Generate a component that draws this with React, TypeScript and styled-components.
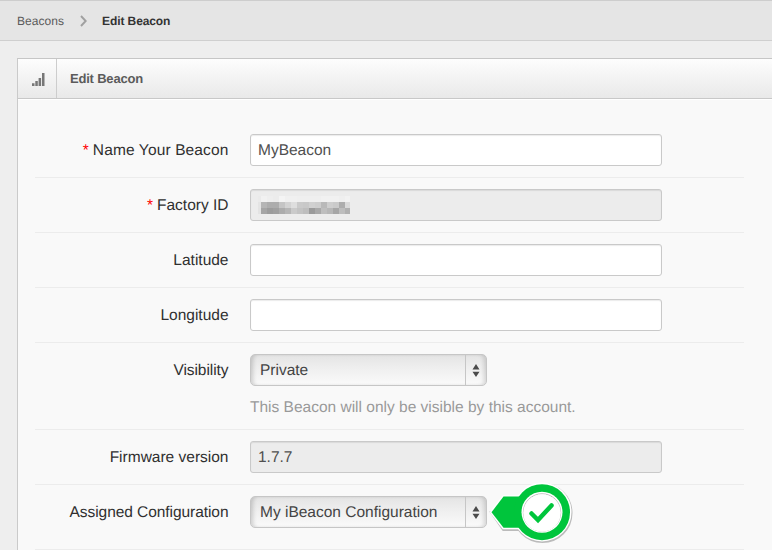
import React from "react";
import styled, { createGlobalStyle } from "styled-components";

const GlobalStyle = createGlobalStyle`
  * { box-sizing: border-box; }
  body {
    margin: 0;
    height: 550px;
    overflow: hidden;
    background: #eeeeee;
    font-family: "Liberation Sans", Arial, Helvetica, sans-serif;
    text-rendering: geometricPrecision;
    color: #333;
  }
`;

const Page = styled.div`
  width: 772px;
  height: 550px;
  overflow: hidden;
`;

const Breadcrumbs = styled.nav`
  height: 41px;
  display: flex;
  align-items: center;
  padding: 0 0 0 17px;
  background: #e5e5e5;
  border-top: 1px solid #cdcdcd;
  border-bottom: 1px solid #cfcfcf;
  font-size: 12px;
`;

const Crumb = styled.span<{ $current?: boolean }>`
  color: ${(p) => (p.$current ? "#333" : "#5c5c5c")};
  font-weight: ${(p) => (p.$current ? 700 : 400)};
  letter-spacing: ${(p) => (p.$current ? "-0.1px" : "0.05px")};
`;

const Chevron = styled.svg`
  width: 8px;
  height: 12px;
  margin: 0 14px 0 16px;
`;

const Panel = styled.section`
  margin: 17px 0 0 17px;
  height: 492px;
  border-left: 1px solid #cacaca;
  border-top: 1px solid #c6c6c6;
  background: #f9f9f9;
`;

const PanelHeader = styled.header`
  height: 40px;
  display: flex;
  border-bottom: 1px solid #c8c8c8;
  background: linear-gradient(#fdfdfd, #e9e9e9);
  box-shadow: 0 1px 0 #fff;
`;

const HeaderIcon = styled.div`
  width: 39px;
  padding: 14px 0 0 14px;
  border-right: 1px solid #cdcdcd;
`;

const PanelTitle = styled.h1`
  margin: 0;
  padding-left: 13px;
  font-size: 13px;
  line-height: 39px;
  letter-spacing: -0.2px;
  color: #5b5b5b;
`;

const Form = styled.form`
  padding: 24px 28px 0 17px;
`;

const Row = styled.div<{ $height?: number }>`
  height: ${(p) => p.$height ?? 55}px;
  display: flex;
  align-items: flex-start;
  padding-top: 11px;
  border-bottom: 1px solid #ececec;
  font-size: 15.5px;
`;

const Label = styled.label<{ $tracking?: number }>`
  width: 193.5px;
  margin-right: 21.5px;
  text-align: right;
  line-height: 34px;
  letter-spacing: ${(p) => p.$tracking ?? 0}px;
  color: #303030;
  white-space: nowrap;
`;

const Required = styled.span`
  color: #f00;
  margin-right: 4px;
`;

const Field = styled.div<{ $readOnly?: boolean }>`
  width: 412px;
  height: 32px;
  padding: 0 7px;
  border: 1px solid #c9c9c9;
  border-radius: 3px;
  background: ${(p) => (p.$readOnly ? "#ececec" : "#fff")};
  box-shadow: inset 0 1px 1px rgba(0, 0, 0, 0.08);
  line-height: 32px;
  color: #505050;
`;

const Select = styled.div`
  width: 237px;
  height: 32px;
  display: flex;
  border: 1px solid #c6c6c6;
  border-radius: 5px;
  background: linear-gradient(#e4e4e4, #f0f0f0 50%, #fafafa);
  box-shadow: inset 4px 0 4px -2px rgba(0, 0, 0, 0.17),
    inset -4px 0 4px -2px rgba(0, 0, 0, 0.14);
  line-height: 32px;
  color: #444;
`;

const SelectValue = styled.span`
  flex: 1;
  padding-left: 9px;
`;

const Stepper = styled.span`
  width: 21px;
  display: flex;
  justify-content: center;
  align-items: center;
  border-left: 1px solid #c6c6c6;
`;

const Stack = styled.div`
  display: flex;
  flex-direction: column;
`;

const Hint = styled.span`
  margin-top: 13px;
  line-height: 18px;
  color: #999;
`;

const Mosaic = styled.div`
  display: grid;
  grid-template-columns: 3px repeat(14, 6px) 5px;
  grid-auto-rows: 6px;
  padding-top: 6px;
`;

const Cell = styled.i<{ $shade: string }>`
  background: #${(p) => p.$shade};
`;

const Callout = styled.svg`
  width: 86px;
  height: 64px;
  margin: -16px 0 0 1px;
  flex: none;
`;

const SHADES = [
  "eaeaea f1f1f1 eeeeee ececec f4f4f4 f0f0f0 f0f0f0 efefef efefef efefef efefef f1f1f1 f1f1f1 f1f1f1 efefef f2f2f2",
  "e4e4e4 b5b5b5 adadad adadad c5c5c5 d3d3d3 dedede cacaca c8c8c8 d0d0d0 cdcdcd b9b9b9 cecece cacaca adadad dadada",
  "e3e3e3 a5a5a5 9c9c9c a0a0a0 acacac b6b6b6 cacaca c3c3c3 bdbdbd 9a9a9a a8a8a8 bebebe b7b7b7 a6a6a6 bdbdbd b0b0b0",
].flatMap((line) => line.split(" "));

const Arrows = () => (
  <svg width="8" height="15" viewBox="0 0 8 15">
    <path d="M4 1 7.5 6.5H.5ZM4 14 .5 8.7h7Z" fill="#4b4b4b" />
  </svg>
);

const Dropdown = ({ value }: { value: string }) => (
  <Select>
    <SelectValue>{value}</SelectValue>
    <Stepper>
      <Arrows />
    </Stepper>
  </Select>
);

export default function App() {
  return (
    <Page>
      <GlobalStyle />
      <Breadcrumbs>
        <Crumb>Beacons</Crumb>
        <Chevron viewBox="0 0 8 12">
          <path d="M1 1l4.7 5L1 11" fill="none" stroke="#a0a0a0" strokeWidth="1.9" />
        </Chevron>
        <Crumb $current>Edit Beacon</Crumb>
      </Breadcrumbs>
      <Panel>
        <PanelHeader>
          <HeaderIcon>
            <svg width="13" height="14" viewBox="0 0 13 14" fill="#777" display="block">
              <path d="M0 10.3h2.5V13H0zM3.3 8h2.5v5H3.3zM6.6 5h2.5v8H6.6zM10 0h2.5v13H10z" />
            </svg>
          </HeaderIcon>
          <PanelTitle>Edit Beacon</PanelTitle>
        </PanelHeader>
        <Form>
          <Row>
            <Label $tracking={0.13}><Required>*</Required>Name Your Beacon</Label>
            <Field>MyBeacon</Field>
          </Row>
          <Row>
            <Label><Required>*</Required>Factory ID</Label>
            <Field $readOnly>
              <Mosaic>
                {SHADES.map((shade, i) => (
                  <Cell key={i} $shade={shade} />
                ))}
              </Mosaic>
            </Field>
          </Row>
          <Row>
            <Label>Latitude</Label>
            <Field />
          </Row>
          <Row>
            <Label>Longitude</Label>
            <Field />
          </Row>
          <Row $height={87}>
            <Label $tracking={-0.06}>Visibility</Label>
            <Stack>
              <Dropdown value="Private" />
              <Hint>This Beacon will only be visible by this account.</Hint>
            </Stack>
          </Row>
          <Row>
            <Label>Firmware version</Label>
            <Field $readOnly>1.7.7</Field>
          </Row>
          <Row $height={65}>
            <Label $tracking={-0.06}>Assigned Configuration</Label>
            <Dropdown value="My iBeacon Configuration" />
            <Callout viewBox="0 0 86 64">
              <g fill="#bbb" stroke="#bbb" strokeWidth="3">
                <path d="M4 33 15.5 49.5H36V33Z" />
                <circle cx="54.5" cy="33" r="28.5" />
              </g>
              <g fill="#fff" stroke="#fff" strokeWidth="3">
                <path d="M3.5 32.3 15.5 16.7H36V47.7H15.5Z" />
                <circle cx="54" cy="32" r="28" />
              </g>
              <path d="M15.5 16.5H40V47.7H15.5L3.5 32.3Z" fill="#00c53c" />
              <circle cx="54" cy="32.2" r="28" fill="#00c53c" />
              <circle cx="54" cy="32.2" r="20.5" fill="#fff" />
              <circle cx="54" cy="32.5" r="18.7" fill="none" stroke="#bbb" />
              <circle cx="54" cy="33" r="18.7" fill="#fff" />
              <path d="M43.5 33.5 50 40 63.5 25.5" fill="none" stroke="#00c53c" strokeWidth="4.5" strokeLinecap="round" />
            </Callout>
          </Row>
        </Form>
      </Panel>
    </Page>
  );
}
